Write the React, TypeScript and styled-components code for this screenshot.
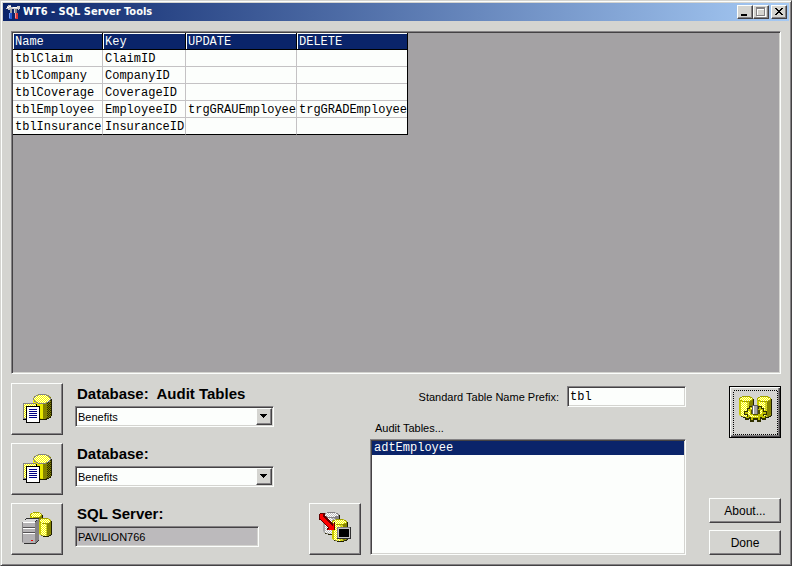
import React, { useId, useState } from "react";
import styled, { createGlobalStyle, css } from "styled-components";

const face = "#d4d4d0";
const light = "#fcfefc";
const shade = "#848284";
const dark = "#444244";
const navy = "#0a246a";
const uiFont = '"Liberation Sans", Arial, sans-serif';
const monoFont = '"Liberation Mono", "Courier New", monospace';

const GlobalStyle = createGlobalStyle`
  * { box-sizing: border-box; }
  body { margin: 0; background: ${face}; color: #000; font: 11px/16px ${uiFont}; }
  button, input, select { font: inherit; color: inherit; margin: 0; border-radius: 0; outline: none; }
`;

const raised = css`
  border: 1px solid;
  border-color: ${light} ${dark} ${dark} ${light};
  box-shadow: inset -1px -1px ${shade};
  background: ${face};
`;

const sunken = css`
  border: 1px solid;
  border-color: ${shade} ${light} ${light} ${shade};
  box-shadow: inset 1px 1px ${dark}, inset -1px -1px ${face};
`;

const Window = styled.main`
  min-height: 100vh;
  display: flex;
  flex-direction: column;
  padding: 2px;
  background: ${face};
  border: 1px solid;
  border-color: ${face} ${dark} ${dark} ${face};
  box-shadow: inset 1px 1px ${light}, inset -1px -1px ${shade};
`;

const TitleBar = styled.header`
  display: flex;
  align-items: center;
  height: 18px;
  padding: 0 2px;
  background: linear-gradient(90deg, ${navy}, #a6caf4);
`;

const Title = styled.h1`
  flex: 1;
  margin: 0 0 0 2px;
  color: ${light};
  font: bold 11px/16px "DejaVu Sans Condensed", "DejaVu Sans", sans-serif;
`;

const CaptionButton = styled.button<{ $apart?: boolean }>`
  ${raised}
  width: 16px;
  height: 14px;
  padding: 0;
  margin-left: ${(p) => (p.$apart ? 2 : 0)}px;
  svg { display: block; }
`;

const Content = styled.div`
  flex: 1;
  display: flex;
  flex-direction: column;
  gap: 9px;
  padding: 10px 8px 8px;
`;

const GridPanel = styled.section`
  ${sunken}
  flex: 1;
  padding: 1px;
  background: #a4a2a4;
`;

const Table = styled.table`
  border-collapse: separate;
  border-spacing: 0;
  table-layout: fixed;
  width: 395px;
  background: ${light};
  border-right: 1px solid #000;
  font: 12px/14px ${monoFont};
`;

const HeadCell = styled.th<{ $width: number }>`
  width: ${(p) => p.$width}px;
  height: 17px;
  padding: 2px 0 0 2px;
  text-align: left;
  font-weight: normal;
  color: ${light};
  background: ${navy};
  border-bottom: 1px solid #000;
  border-right: 1px solid #000;
  box-shadow: inset 1px 1px ${light};
  &:last-child { border-right: 0; }
`;

const Cell = styled.td`
  height: 17px;
  padding: 2px 0 0 2px;
  white-space: nowrap;
  border-right: 1px solid #c4c2c4;
  border-bottom: 1px solid #c4c2c4;
  &:last-child { border-right: 0; }
  tr:last-child > & { border-bottom-color: #000; }
`;

const Controls = styled.section`
  display: flex;
  align-items: stretch;
`;

const Sources = styled.div`
  display: flex;
  flex-direction: column;
  gap: 8px;
  width: 263px;
`;

const SourceRow = styled.div`
  display: flex;
  gap: 12px;
`;

const ToolButton = styled.button<{ $default?: boolean }>`
  ${raised}
  flex: none;
  width: 52px;
  height: 52px;
  padding: 1px;
  svg { display: block; }
  ${(p) =>
    p.$default &&
    css`
      border-color: #000;
      box-shadow: inset 1px 1px ${light}, inset -1px -1px ${dark}, inset -2px -2px ${shade};
    `}
`;

const SourceField = styled.div`
  flex: 1;
  display: flex;
  flex-direction: column;
  gap: 4px;
  padding-top: 3px;
`;

const SourceLabel = styled.label`
  padding-left: 2px;
  white-space: pre;
  font: bold 15px/16px "Liberation Sans", Arial, sans-serif;
`;

const ComboFrame = styled.div`
  position: relative;
  height: 21px;
`;

const Combo = styled.select`
  ${sunken}
  appearance: none;
  width: 100%;
  height: 21px;
  padding: 0 20px 0 2px;
  background: ${light};
`;

const ComboArrow = styled.span`
  ${raised}
  position: absolute;
  top: 2px;
  right: 2px;
  width: 16px;
  height: 17px;
  pointer-events: none;
  svg { display: block; }
`;

const TextBox = styled.input<{ $mono?: boolean }>`
  ${sunken}
  height: 21px;
  width: ${(p) => (p.$mono ? 119 : 184)}px;
  padding: 0 2px;
  background: ${(p) => (p.$mono ? light : "#bcbabc")};
  ${(p) => p.$mono && css`font: 12px/16px ${monoFont};`}
`;

const RefreshSlot = styled.div`
  display: flex;
  align-items: flex-end;
  margin: 0 9px 0 35px;
`;

const AuditColumn = styled.div`
  flex: 1;
  display: flex;
  flex-direction: column;
  padding-top: 3px;
`;

const PrefixRow = styled.div`
  display: flex;
  justify-content: flex-end;
  align-items: center;
  gap: 8px;
`;

const AuditLabel = styled.label`
  padding: 13px 0 3px 5px;
`;

const ListBox = styled.select`
  ${sunken}
  flex: 1;
  width: 100%;
  padding: 1px;
  background: ${light};
  font: 12px/14px ${monoFont};
  overflow: hidden;
  option {
    height: 14px;
    min-height: 14px;
    padding: 0 2px;
  }
  option:checked {
    background: linear-gradient(${navy}, ${navy});
    -webkit-text-fill-color: ${light};
  }
`;

const Actions = styled.div`
  width: 72px;
  margin-left: 23px;
  padding-top: 3px;
  display: flex;
  flex-direction: column;
  align-items: flex-end;
  gap: 7px;
`;

const Spacer = styled.div`
  flex: 1;
`;

const PushButton = styled.button`
  ${raised}
  width: 100%;
  height: 25px;
  padding: 0;
  font-size: 12px;
`;

const HiddenDefs = styled.svg`
  position: absolute;
`;

const Patterns = () => (
  <HiddenDefs width="0" height="0" aria-hidden="true">
    <defs>
      {[
        ["ditherLight", "#f8f800", "#ffffd0"],
        ["ditherGold", "#f4f400", "#b0b040"],
        ["ditherDark", "#848200", "#303000"],
        ["ditherGrey", "#ffffff", "#c0c0c0"],
        ["ditherSteel", "#a0a0a0", "#d8d8d8"],
      ].map(([id, a, b]) => (
        <pattern key={id} id={id} width="2" height="2" patternUnits="userSpaceOnUse">
          <rect width="2" height="2" fill={a} />
          <rect width="1" height="1" fill={b} />
          <rect x="1" y="1" width="1" height="1" fill={b} />
        </pattern>
      ))}
    </defs>
  </HiddenDefs>
);

type CylinderProps = { x: number; y: number; w: number; h: number; ry?: number; tone?: "dark" | "bright" | "grey" };

const tones = {
  dark: { body: "#e8e800", left: "#f8f800", right: "#848200", edge: "url(#ditherDark)", top: "url(#ditherLight)", rim: "#848284" },
  bright: { body: "url(#ditherLight)", left: "#c8c800", right: "url(#ditherGold)", edge: "#848200", top: "url(#ditherLight)", rim: "#a0a000" },
  grey: { body: "url(#ditherGrey)", left: "#a8a8a8", right: "url(#ditherSteel)", edge: "#848284", top: "url(#ditherGrey)", rim: "#848284" },
};

const Cylinder = ({ x, y, w, h, ry = 3, tone = "bright" }: CylinderProps) => {
  const id = useId();
  const c = tones[tone];
  const d = `M${x} ${y + ry}a${w / 2} ${ry} 0 0 1 ${w} 0v${h - 2 * ry}a${w / 2} ${ry} 0 0 1 ${-w} 0z`;
  return (
    <g>
      <clipPath id={id}>
        <path d={d} />
      </clipPath>
      <path d={d} fill="#202000" transform="translate(1 1)" />
      <g clipPath={`url(#${id})`}>
        <rect x={x} y={y} width={w} height={h} fill={c.body} />
        <rect x={x} y={y} width="2" height={h} fill={c.left} />
        <rect x={x + Math.round(w * 0.55)} y={y} width={w} height={h} fill={c.right} />
        <rect x={x + w - 4} y={y} width="4" height={h} fill={c.edge} />
      </g>
      <ellipse cx={x + w / 2} cy={y + ry} rx={w / 2} ry={ry} fill={c.rim} />
      <ellipse cx={x + w / 2} cy={y + ry} rx={w / 2 - 1} ry={ry - 1} fill={c.top} />
    </g>
  );
};

const IconCanvas = ({ dx = 2, dy = 2, children }: { dx?: number; dy?: number; children: React.ReactNode }) => (
  <svg width="48" height="48" viewBox={`${-dx} ${-dy} 48 48`} shapeRendering="crispEdges" aria-hidden="true">
    {children}
  </svg>
);

const DatabaseScriptIcon = () => (
  <IconCanvas>
    <Cylinder x={18} y={7} w={18} h={25} ry={5} tone="dark" />
    <path d="M8 17h14v16H8z" fill="#000" />
    <path d="M8 16h13v16H8z" fill="#848284" />
    <path d="M9 17h12v14H9z" fill="url(#ditherLight)" />
    <path d="M11 19h14v17H11z" fill="#000" />
    <path d="M12 20h12v15H12z" fill="#fff" />
    <path d="M14 22h8v1h-8zM14 24h8v1h-8zM14 26h8v1h-8zM14 28h8v1h-8zM14 30h8v1h-8z" fill="#000084" />
  </IconCanvas>
);

const ServerIcon = () => (
  <IconCanvas>
    <Cylinder x={15} y={5} w={12} h={18} />
    <Cylinder x={24} y={11} w={12} h={18} />
    <path d="M7 15l5-4h12v22l-4 4H9v-1H7z" fill="#303030" />
    <path d="M7 15h13v21H7z" fill="#b4b2b4" />
    <path d="M7 15v-1h2v-1h2v-1h12v1h-2v1h-1v1z" fill="#d8d8d8" />
    <path d="M7 15h1v20H7z" fill="#848284" />
    <path d="M20 15l4-3v20l-4 4z" fill="#848284" />
    <path d="M8 15h12v1H8zM8 21h12v1H8zM8 26h12v1H8z" fill="#fff" />
    <path d="M8 20h12v1H8zM8 25h12v1H8z" fill="#545254" />
    <path d="M16 33h2v1h-2z" fill="#f00000" />
  </IconCanvas>
);

const RefreshAuditIcon = () => (
  <IconCanvas dx={1}>
    <Cylinder x={11} y={5} w={16} h={22} tone="grey" />
    <Cylinder x={20} y={12} w={15} h={22} />
    <path d="M8 6h5v3l9 8v-2h1v8h-8v-2h1l-8-8H7V7z" fill="#600000" />
    <path d="M8 7h3v3l10 9v-2h1v6h-6v-1h1v-1L8 12z" fill="#ff0000" />
    <path d="M25 20h14v12H25z" fill="#303030" />
    <path d="M25 20h13v11H25z" fill="#848284" />
    <path d="M26 21h12v10H26z" fill="#c4c2c4" />
    <path d="M27 22h10v8H27z" fill="#000" />
  </IconCanvas>
);

const GenerateIcon = () => (
  <IconCanvas dx={1} dy={-1}>
    <Cylinder x={7} y={9} w={14} h={21} />
    <Cylinder x={25} y={9} w={14} h={21} />
    <path
      d="M17 19h4v2h5v-2h4v2h2v3h3v4h-3v1h2v4h-4v-1h-1v3h-4v-2h-3v2h-4v-3h-1v1h-4v-3h2v-2h-3v-4h3v-3h2z"
      fill="#303000"
    />
    <path
      d="M18 20h2v2h7v-2h2v2h2v3h3v2h-3v2h2v2h-3v-1h-2v3h-2v-2h-5v2h-2v-3h-2v1h-3v-1h2v-3h-3v-2h3v-3h2z"
      fill="#c0c000"
    />
    <path d="M18 21h2v1h-2zM16 24h2v4h-2zM18 28h3v1h5v1h-8zM28 23h2v4h-2z" fill="url(#ditherLight)" />
    <path d="M19 23h9v4h-2v1h-5v-1h-2z" fill="#505000" />
    <path d="M20 18h6v9h-6z" fill="#606060" />
    <path d="M21 19h4v8h-4z" fill="#a4a2a4" />
    <path d="M21 19h1v8h-1z" fill="#fff" />
    <rect x="1" y="3" width="44" height="44" fill="none" stroke="#000" strokeDasharray="1 1" transform="translate(.5 .5)" />
  </IconCanvas>
);

const ToolsIcon = () => (
  <svg width="16" height="16" viewBox="0 0 16 16" shapeRendering="crispEdges" aria-hidden="true">
    <path d="M1 4h1V2h1V1h3v2h1v2H5v1H3V5H1z" fill="#c4c2c4" />
    <path d="M2 3h2v1H2zM4 2h2v1H4z" fill="#fff" />
    <path d="M5 5h2v5H5z" fill="#a4a2a4" />
    <path d="M7 3h5V2h3v3h-1v1h-1V5h-2v4H9V5H7z" fill="#d4d2d4" />
    <path d="M8 3h4v1H8z" fill="#fff" />
    <path d="M10 5h2v5h-2z" fill="#848284" />
    <path d="M4 9h3v6H4z" fill="#2858d0" />
    <path d="M4 9h1v5H4z" fill="#70a0ff" />
    <path d="M10 9h3v6h-3z" fill="#d83838" />
    <path d="M10 9h1v5h-1z" fill="#ff9090" />
  </svg>
);

const MinimizeGlyph = () => (
  <svg width="14" height="12" viewBox="0 0 14 12" aria-hidden="true">
    <path d="M3 8h6v2H3z" />
  </svg>
);

const MaximizeGlyph = () => (
  <svg width="14" height="12" viewBox="0 0 14 12" shapeRendering="crispEdges" aria-hidden="true">
    <path d="M3 2h9v9H3zM4 4v6h7V4z" fill={light} fillRule="evenodd" />
    <path d="M2 1h9v9H2zM3 3v6h7V3z" fill={shade} fillRule="evenodd" />
  </svg>
);

const CloseGlyph = () => (
  <svg width="14" height="12" viewBox="0 0 14 12" shapeRendering="crispEdges" aria-hidden="true">
    <path d="M3 2h2v1h1v1h2V3h1V2h2v1h-1v1H9v1H8v1h1v1h1v1h1v1H9V8H8V7H6v1H5v1H3V8h1V7h1V6h1V5H5V4H4V3H3z" />
  </svg>
);

const DownGlyph = () => (
  <svg width="14" height="15" viewBox="0 0 14 15" shapeRendering="crispEdges" aria-hidden="true">
    <path d="M3 5h7v1H9v1H8v1H7v1H6V8H5V7H4V6H3z" />
  </svg>
);

const DatabaseCombo = ({ id }: { id: string }) => (
  <ComboFrame>
    <Combo id={id} defaultValue="Benefits">
      <option>Benefits</option>
    </Combo>
    <ComboArrow>
      <DownGlyph />
    </ComboArrow>
  </ComboFrame>
);

const columns = [
  { name: "Name", width: 90 },
  { name: "Key", width: 83 },
  { name: "UPDATE", width: 111 },
  { name: "DELETE", width: 110 },
];

const rows = [
  ["tblClaim", "ClaimID", "", ""],
  ["tblCompany", "CompanyID", "", ""],
  ["tblCoverage", "CoverageID", "", ""],
  ["tblEmployee", "EmployeeID", "trgGRAUEmployee", "trgGRADEmployee"],
  ["tblInsurance", "InsuranceID", "", ""],
];

export default function App() {
  const [prefix, setPrefix] = useState("tbl");
  return (
    <>
      <GlobalStyle />
      <Patterns />
      <Window>
        <TitleBar>
          <ToolsIcon />
          <Title>WT6 - SQL Server Tools</Title>
          <CaptionButton aria-label="Minimize"><MinimizeGlyph /></CaptionButton>
          <CaptionButton aria-label="Maximize" disabled><MaximizeGlyph /></CaptionButton>
          <CaptionButton aria-label="Close" $apart><CloseGlyph /></CaptionButton>
        </TitleBar>
        <Content>
          <GridPanel>
            <Table>
              <thead>
                <tr>
                  {columns.map((c) => (
                    <HeadCell key={c.name} $width={c.width}>{c.name}</HeadCell>
                  ))}
                </tr>
              </thead>
              <tbody>
                {rows.map((row) => (
                  <tr key={row[0]}>
                    {row.map((value, i) => (
                      <Cell key={i}>{value}</Cell>
                    ))}
                  </tr>
                ))}
              </tbody>
            </Table>
          </GridPanel>
          <Controls>
            <Sources>
              <SourceRow>
                <ToolButton aria-label="Load audit tables"><DatabaseScriptIcon /></ToolButton>
                <SourceField>
                  <SourceLabel htmlFor="auditDb">{"Database:  Audit Tables"}</SourceLabel>
                  <DatabaseCombo id="auditDb" />
                </SourceField>
              </SourceRow>
              <SourceRow>
                <ToolButton aria-label="Load database"><DatabaseScriptIcon /></ToolButton>
                <SourceField>
                  <SourceLabel htmlFor="mainDb">Database:</SourceLabel>
                  <DatabaseCombo id="mainDb" />
                </SourceField>
              </SourceRow>
              <SourceRow>
                <ToolButton aria-label="Connect to server"><ServerIcon /></ToolButton>
                <SourceField>
                  <SourceLabel htmlFor="server">SQL Server:</SourceLabel>
                  <TextBox id="server" value="PAVILION766" readOnly />
                </SourceField>
              </SourceRow>
            </Sources>
            <RefreshSlot>
              <ToolButton aria-label="Refresh audit tables"><RefreshAuditIcon /></ToolButton>
            </RefreshSlot>
            <AuditColumn>
              <PrefixRow>
                <label htmlFor="prefix">Standard Table Name Prefix:</label>
                <TextBox id="prefix" $mono value={prefix} onChange={(e) => setPrefix(e.target.value)} />
              </PrefixRow>
              <AuditLabel htmlFor="auditTables">Audit Tables...</AuditLabel>
              <ListBox id="auditTables" size={2} defaultValue="adtEmployee">
                <option>adtEmployee</option>
              </ListBox>
            </AuditColumn>
            <Actions>
              <ToolButton aria-label="Generate triggers" $default><GenerateIcon /></ToolButton>
              <Spacer />
              <PushButton>About...</PushButton>
              <PushButton>Done</PushButton>
            </Actions>
          </Controls>
        </Content>
      </Window>
    </>
  );
}
